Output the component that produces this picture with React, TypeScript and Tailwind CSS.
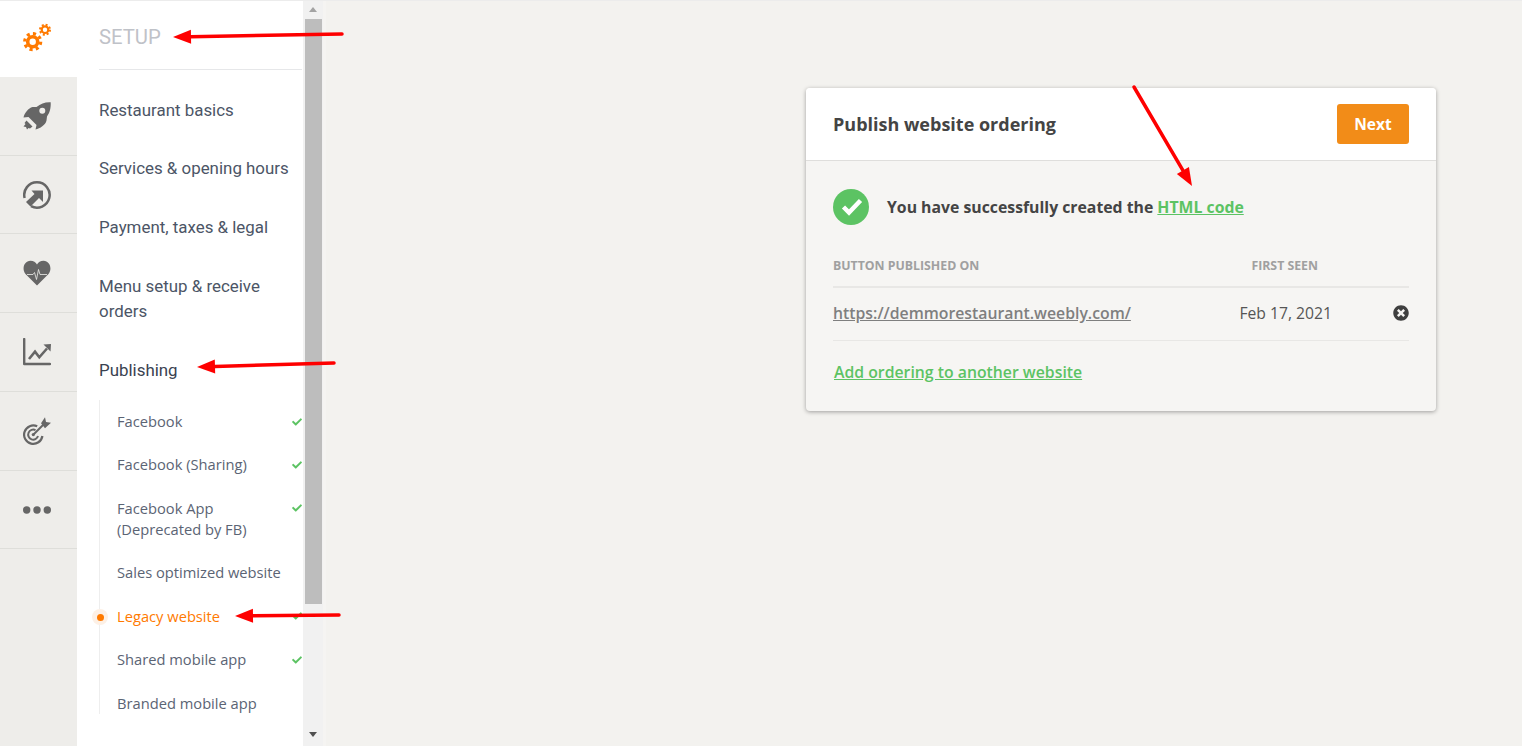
import { FaCheck, FaTimesCircle } from 'react-icons/fa';

const MENU = [
  { label: 'Restaurant basics', h: 'h-[58px]' },
  { label: 'Services & opening hours', h: 'h-[59px]' },
  { label: 'Payment, taxes & legal', h: 'h-[59px]' },
  { label: 'Menu setup & receive orders', h: 'h-[84px]' },
  { label: 'Publishing', h: 'h-[59px]', dark: true },
];

const SUB_MENU = [
  { label: 'Facebook', done: true, h: 'h-[43px]' },
  { label: 'Facebook (Sharing)', done: true, h: 'h-[43px]' },
  { label: 'Facebook App (Deprecated by FB)', done: true, h: 'h-[65px]' },
  { label: 'Sales optimized website', h: 'h-[43px]' },
  { label: 'Legacy website', done: true, active: true, h: 'h-[44px]' },
  { label: 'Shared mobile app', done: true, h: 'h-[43px]' },
  { label: 'Branded mobile app', h: 'h-[44px]' },
];

function Gears() {
  return (
    <svg className="overflow-visible" width="28" height="28" viewBox="0 0 28 28" fill="none" stroke="#ff7a00">
      <circle cx="9.7" cy="16.7" r="5" strokeWidth="3.6" />
      <circle cx="9.7" cy="16.7" r="8" strokeWidth="3.2" strokeDasharray="3.1 3.18" />
      <circle cx="22" cy="4.7" r="3.3" strokeWidth="2.2" />
      <circle cx="22" cy="4.7" r="5" strokeWidth="2" strokeDasharray="2 1.93" />
    </svg>
  );
}

function Rocket() {
  return (
    <svg width="28" height="28" viewBox="0 0 28 28" fill="#666666">
      <path
        fillRule="evenodd"
        d="M27.7.3C28 7 26.5 11 24 14.5l-.5 4C22.5 23 17 26.5 12.5 27.5l1-4.500-8-8-5 .5C1.5 11 5.500 6 9.500 5h4C18 1.500 22 0 27.700.3zM19.300 5.700a3 3 0 1 0 0 6 3 3 0 0 0 0-6z"
      />
      <path d="M3.500 18.500 9.500 24.500 7 26.500l-1.500-.5L4 27.500 3 25l-2.500-.5 2-2.500-1-1z" />
    </svg>
  );
}

function ShareCircle() {
  return (
    <svg width="28" height="28" viewBox="0 0 28 28" fill="none">
      <path d="M1.6 17A12.7 12.7 0 1 1 8 25.2" stroke="#666666" strokeWidth="2.5" />
      <path d="M8.500 9.500h11.500v11.500l-4-4-8.500 8.500-4.500-4.500 8.500-8z" fill="#666666" />
    </svg>
  );
}

function Heart() {
  return (
    <svg width="28" height="26" viewBox="0 0 28 26" fill="none">
      <path
        d="M14 25.500 2.500 14C-1.500 9 1 1 7.500.8c3 0 5.300 1.700 6.500 3.700C15.200 2.500 17.500.8 20.500.8 27 1 29.500 9 25.500 14z"
        fill="#666666"
      />
      <path d="M4 14.500h6l1.500-2 2 7 2-10 1.500 5h7" stroke="#eeedea" strokeWidth="0.8" />
    </svg>
  );
}

function Chart() {
  return (
    <svg width="28" height="28" viewBox="0 0 28 28" fill="none" stroke="#666666">
      <path d="M1.2 1v25H27" strokeWidth="2.4" strokeLinecap="round" strokeLinejoin="round" />
      <path d="M6 21l6-7.300 4.300 5.600L24 10.500" strokeWidth="2.6" />
      <path d="M20.500 6.500 28 6l-.5 7.500z" fill="#666666" stroke="none" />
    </svg>
  );
}

function Target() {
  return (
    <svg width="28" height="28" viewBox="0 0 28 28" fill="none" stroke="#666666">
      <path d="M14.2 9.3A9.2 9.2 0 1 0 19.400 19" strokeWidth="2.2" />
      <path d="M12.500 13.200A5 5 0 1 0 15 19" strokeWidth="2" />
      <circle cx="10.3" cy="17.6" r="1.6" fill="#666666" stroke="none" />
      <path d="M10.500 17.500 21 7" strokeWidth="2" />
      <path d="M18 6.300 22 .3 23 5l5 .7-6 5.600z" fill="#666666" stroke="none" />
    </svg>
  );
}

function Dots() {
  return (
    <svg width="28" height="8" viewBox="0 0 28 8" fill="#666666">
      <circle cx="3.7" cy="4" r="3.7" />
      <circle cx="14" cy="4" r="3.7" />
      <circle cx="24.3" cy="4" r="3.7" />
    </svg>
  );
}

function Rail() {
  const cell = 'flex items-center justify-center border-b border-[#dededa] pr-[3px]';
  return (
    <div className="w-[77px] shrink-0 bg-[#eeedea]">
      <div className="flex h-[77px] items-center justify-center bg-white pr-[3px]">
        <Gears />
      </div>
      <div className={`${cell} h-[79px]`}><Rocket /></div>
      <div className={`${cell} h-[78px]`}><ShareCircle /></div>
      <div className={`${cell} h-[79px]`}><Heart /></div>
      <div className={`${cell} h-[79px]`}><Chart /></div>
      <div className={`${cell} h-[79px]`}><Target /></div>
      <div className={`${cell} h-[78px]`}><Dots /></div>
    </div>
  );
}

function Sidebar() {
  return (
    <div className="flex w-[226px] shrink-0 flex-col bg-white pl-[22px] pr-[1px] font-['Roboto',sans-serif]">
      <div className="flex h-[70px] items-center border-b border-[#e6e7e9] pt-[5px] text-[20.3px] text-[#bfc2c8]">SETUP</div>
      {MENU.map((item, i) => (
        <div
          key={item.label}
          className={`flex items-center text-[16.9px] leading-[25px] ${item.h} ${item.dark ? 'text-[#3a4250]' : 'text-[#4c5566]'} ${i === 0 ? 'mt-[11px]' : ''}`}
        >
          <span className="pr-[8px]">{item.label}</span>
        </div>
      ))}
      <div className="h-[314px] border-l border-[#eeeeee] font-['Open_Sans',sans-serif]">
        {SUB_MENU.map(item => (
          <div key={item.label} className={`relative flex items-center pl-[17px] text-[14.7px] leading-[21px] ${item.h} ${item.active ? 'text-[#ff7a00]' : 'text-[#5b6474]'}`}>
            <span className={item.label.startsWith('Facebook App') ? 'w-[150px]' : 'whitespace-nowrap'}>{item.label}</span>
            {item.done && <FaCheck size={10} className="absolute right-0 top-[17px] text-[#5cc363]" />}
            {item.active && (
              <span className="absolute left-[-8px] top-[15px] flex h-[16px] w-[16px] items-center justify-center rounded-full bg-[#fdf0e5]">
                <span className="h-[7px] w-[7px] rounded-full bg-[#ff7a00]" />
              </span>
            )}
          </div>
        ))}
      </div>
    </div>
  );
}

function Scrollbar() {
  return (
    <div className="flex w-[23px] shrink-0 flex-col items-center border-r-[3px] border-[#f5f4f2] bg-[#f1f1f1] pr-[1px]">
      <div className="flex h-[19px] items-center justify-center pl-[1px]">
        <div className="h-0 w-0 border-x-[4px] border-b-[5px] border-x-transparent border-b-[#a3a3a3]" />
      </div>
      <div className="ml-[1px] h-[585px] w-[17px] bg-[#bdbdbd]" />
      <div className="mt-auto flex h-[24px] items-center justify-center pl-[1px]">
        <div className="h-0 w-0 border-x-[4px] border-t-[5px] border-x-transparent border-t-[#505050]" />
      </div>
    </div>
  );
}

function Card() {
  return (
    <div className="h-[323px] w-[630px] rounded-[4px] bg-[#f6f5f3] text-[#444444] shadow-[0_1px_4px_rgba(0,0,0,0.35)] font-['Open_Sans',sans-serif]">
      <div className="flex h-[73px] items-center justify-between rounded-t-[4px] border-b border-[#dfdedc] bg-white pl-[27px] pr-[27px]">
        <h1 className="text-[18px] font-bold text-[#444444]">Publish website ordering</h1>
        <button className="h-[40px] w-[72px] rounded-[3px] bg-[#f28c18] pt-px text-[15.5px] font-bold text-white">Next</button>
      </div>
      <div className="px-[27px]">
        <div className="mt-[28px] flex items-center">
          <svg width="36" height="36" viewBox="0 0 36 36">
            <circle cx="18" cy="18" r="18" fill="#5cc363" />
            <path d="M10.500 18l5.500 5.500L27.500 11.500" fill="none" stroke="white" strokeWidth="4.5" />
          </svg>
          <p className="ml-[18px] pt-[2px] text-[15.8px] font-bold">
            You have successfully created the{' '}
            <a className="text-[#5cc363] underline">HTML code</a>
          </p>
        </div>
        <div className="mt-[22px] flex h-[41px] items-center justify-between border-b-2 border-[#e8e7e5] pb-[1px] text-[12.3px] font-bold text-[#a0a0a0]">
          <span>BUTTON PUBLISHED ON</span>
          <span className="mr-[91px]">FIRST SEEN</span>
        </div>
        <div className="flex h-[53px] items-center border-b border-[#e8e7e5]">
          <a className="flex-1 text-[15.8px] font-semibold text-[#7f7f7f] underline">https://demmorestaurant.weebly.com/</a>
          <span className="mr-[61px] text-[15.7px] text-[#555555]">Feb 17, 2021</span>
          <FaTimesCircle size={16} className="mb-[2px] text-[#3f3f3f]" />
        </div>
        <a className="ml-[1px] mt-[20px] block text-[15.8px] font-semibold text-[#5cc363] underline">Add ordering to another website</a>
      </div>
    </div>
  );
}

function Arrow({ x1, y1, x2, y2 }: { x1: number; y1: number; x2: number; y2: number }) {
  const dx = x2 - x1;
  const dy = y2 - y1;
  const len = Math.hypot(dx, dy);
  const ux = dx / len;
  const uy = dy / len;
  const bx = x2 - ux * 18;
  const by = y2 - uy * 18;
  const head = `${x2},${y2} ${bx - uy * 7},${by + ux * 7} ${bx + uy * 7},${by - ux * 7}`;
  return (
    <>
      <line x1={x1} y1={y1} x2={bx} y2={by} stroke="#fe0000" strokeWidth="3.5" strokeLinecap="round" />
      <polygon points={head} fill="#fe0000" />
    </>
  );
}

export default function App() {
  return (
    <div className="relative flex h-[746px] w-[1522px] overflow-hidden bg-[#f3f2ef]">
      <Rail />
      <Sidebar />
      <Scrollbar />
      <main className="flex-1 pl-[480px] pt-[88px]">
        <Card />
      </main>
      <div className="absolute inset-x-0 top-0 h-px bg-[#ececec]" />
      {/* annotation arrows drawn over the screenshot */}
      <svg className="pointer-events-none absolute left-0 top-0" width="1522" height="746">
        <Arrow x1={342} y1={34} x2={173} y2={37} />
        <Arrow x1={334} y1={363} x2={197} y2={367} />
        <Arrow x1={339} y1={615} x2={235} y2={616} />
        <Arrow x1={1134} y1={87} x2={1192} y2={186} />
      </svg>
    </div>
  );
}
